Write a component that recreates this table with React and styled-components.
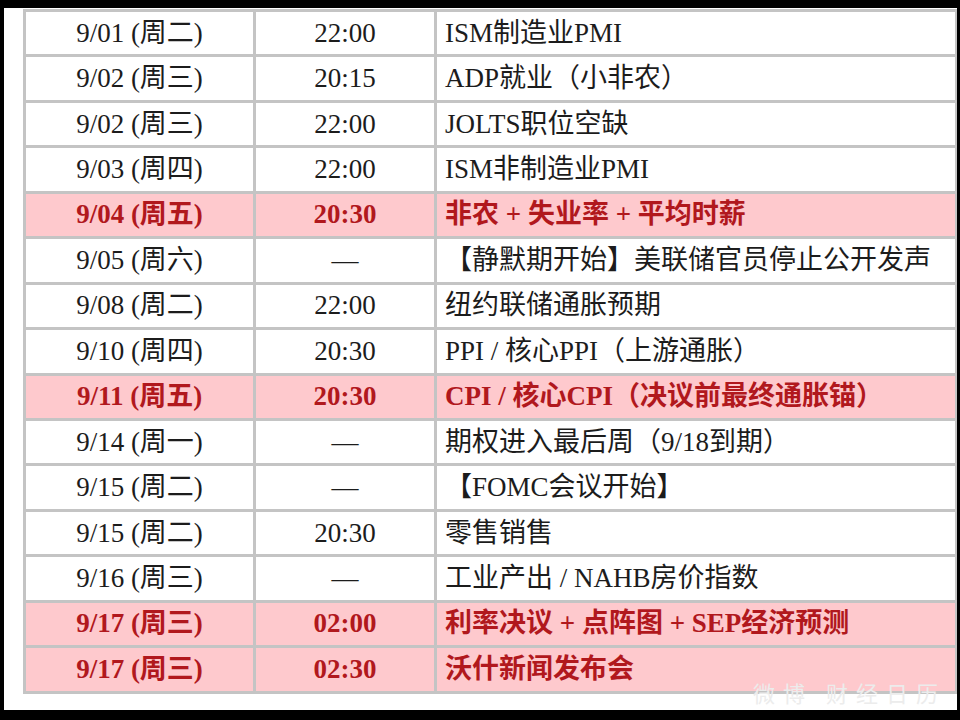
import React from 'react';
import styled, { createGlobalStyle } from 'styled-components';

const GlobalStyle = createGlobalStyle`
	html, body {
		margin: 0;
		padding: 0;
		background: #000;
	}
	* {
		box-sizing: border-box;
	}
`;

const Frame = styled.div`
	width: 960px;
	height: 720px;
	background: #000;
	padding: 8px 3px 10px 4px;
	position: relative;
	overflow: hidden;
`;

const Sheet = styled.div`
	width: 100%;
	height: 100%;
	background: #fff;
	padding: 1px 0 0 19px;
	overflow: hidden;
`;

const Table = styled.div`
	display: grid;
	grid-template-columns: 227px 178px 518px;
	grid-auto-rows: 42.45px;
	gap: 3px;
	padding: 3px;
	width: max-content;
	background: #c4c4c4;
	font-family: "Liberation Serif", "Noto Sans CJK SC", serif;
	font-size: 27px;
`;

const Cell = styled.div`
	display: flex;
	align-items: center;
	justify-content: ${({ $align }) => ($align === 'left' ? 'flex-start' : 'center')};
	padding: ${({ $align }) => ($align === 'left' ? '0 0 0 8px' : '0')};
	background: ${({ $hot }) => ($hot ? '#fec9cd' : '#fff')};
	color: ${({ $hot }) => ($hot ? '#b1181d' : '#1c1c1c')};
	font-weight: ${({ $hot }) => ($hot ? 700 : 400)};
	white-space: nowrap;
	line-height: 1;
`;

const Watermark = styled.div`
	position: absolute;
	right: 14px;
	bottom: 12px;
	font-family: "Noto Sans CJK SC", sans-serif;
	font-size: 22px;
	letter-spacing: 8px;
	color: #ececec;
	pointer-events: none;
`;

const rows = [
	{ date: '9/01 (周二)', time: '22:00', event: 'ISM制造业PMI' },
	{ date: '9/02 (周三)', time: '20:15', event: 'ADP就业（小非农）' },
	{ date: '9/02 (周三)', time: '22:00', event: 'JOLTS职位空缺' },
	{ date: '9/03 (周四)', time: '22:00', event: 'ISM非制造业PMI' },
	{ date: '9/04 (周五)', time: '20:30', event: '非农 + 失业率 + 平均时薪', hot: true },
	{ date: '9/05 (周六)', time: '—', event: '【静默期开始】美联储官员停止公开发声' },
	{ date: '9/08 (周二)', time: '22:00', event: '纽约联储通胀预期' },
	{ date: '9/10 (周四)', time: '20:30', event: 'PPI / 核心PPI（上游通胀）' },
	{ date: '9/11 (周五)', time: '20:30', event: 'CPI / 核心CPI（决议前最终通胀锚）', hot: true },
	{ date: '9/14 (周一)', time: '—', event: '期权进入最后周（9/18到期）' },
	{ date: '9/15 (周二)', time: '—', event: '【FOMC会议开始】' },
	{ date: '9/15 (周二)', time: '20:30', event: '零售销售' },
	{ date: '9/16 (周三)', time: '—', event: '工业产出 / NAHB房价指数' },
	{ date: '9/17 (周三)', time: '02:00', event: '利率决议 + 点阵图 + SEP经济预测', hot: true },
	{ date: '9/17 (周三)', time: '02:30', event: '沃什新闻发布会', hot: true },
];

const App = () => {
	return (
		<>
			<GlobalStyle />
			<Frame>
				<Sheet>
					<Table>
						{rows.map((row, i) => (
							<React.Fragment key={i}>
								<Cell $hot={row.hot}>{row.date}</Cell>
								<Cell $hot={row.hot}>{row.time}</Cell>
								<Cell $hot={row.hot} $align="left">{row.event}</Cell>
							</React.Fragment>
						))}
					</Table>
				</Sheet>
				<Watermark>微博 财经日历</Watermark>
			</Frame>
		</>
	);
};

export default App;
